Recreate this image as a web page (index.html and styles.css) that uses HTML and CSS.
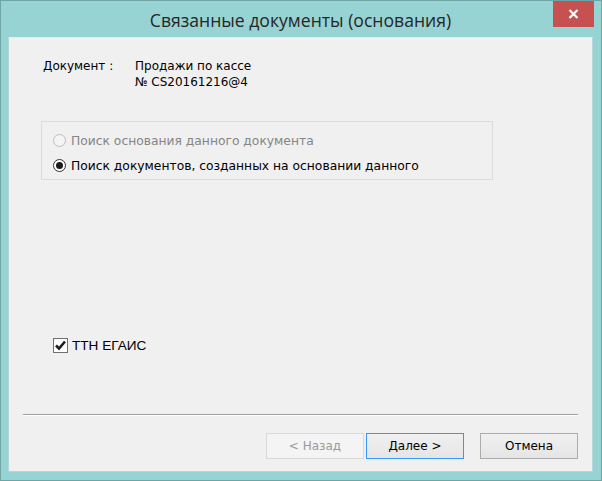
FILE: index.html
```html
<!DOCTYPE html>
<html lang="ru">
<head>
    <meta charset="UTF-8">
    <title>Связанные документы (основания)</title>
    <link rel="stylesheet" href="styles.css">
</head>
<body>
    <div class="window">
        <div class="titlebar">
            <div class="title">Связанные документы (основания)</div>
            <button class="close-btn" title="Закрыть">
                <svg width="11" height="10" viewBox="0 0 11 10">
                    <path d="M1.5 1 L9.5 9 M9.5 1 L1.5 9" stroke="#fff" stroke-width="2.2"/>
                </svg>
            </button>
        </div>

        <div class="client">
            <div class="doc-info">
                <div class="doc-label">Документ :</div>
                <div class="doc-value">
                    <div>Продажи по кассе</div>
                    <div>№ CS20161216@4</div>
                </div>
            </div>

            <div class="group-box">
                <label class="radio disabled">
                    <span class="radio-mark"></span>
                    Поиск основания данного документа
                </label>
                <label class="radio">
                    <span class="radio-mark checked"></span>
                    Поиск документов, созданных на основании данного
                </label>
            </div>

            <label class="check">
                <span class="check-box">
                    <svg width="13" height="13" viewBox="0 0 13 13">
                        <path d="M2 6.5 L5 9.5 L11 2.5" fill="none" stroke="#1e1e1e" stroke-width="2.6"/>
                    </svg>
                </span>
                ТТН ЕГАИС
            </label>

            <div class="separator"></div>

            <div class="buttons">
                <button class="btn" disabled>&lt; Назад</button>
                <button class="btn default">Далее &gt;</button>
                <button class="btn cancel">Отмена</button>
            </div>
        </div>
    </div>
</body>
</html>
```

FILE: styles.css
```css
body {
    margin: 0;
    padding: 0;
    font-family: "DejaVu Sans", Tahoma, sans-serif;
    font-size: 12px;
    color: #000;
}

.window {
    width: 602px;
    height: 481px;
    box-sizing: border-box;
    background: #98d3d3;
    border: 1px solid #6fa5a5;
    display: flex;
    flex-direction: column;
    padding: 0 8px 8px 7px;
}

.titlebar {
    position: relative;
    height: 36px;
    display: flex;
    align-items: center;
    justify-content: center;
}

.title {
    font-family: "Open Sans", "Noto Sans", sans-serif;
    font-size: 17.6px;
    color: #262626;
    padding-top: 2px;
}

.close-btn {
    position: absolute;
    top: 0;
    right: -1px;
    width: 41px;
    height: 26px;
    border: none;
    padding: 0;
    background: #c75050;
    display: flex;
    align-items: center;
    justify-content: center;
}

.client {
    flex: 1;
    background: #f0f0f0;
    border: 1px solid #b4d6d6;
    border-top-color: #dfeeee;
    display: flex;
    flex-direction: column;
}

.doc-info {
    display: flex;
    margin: 20px 0 0 34px;
    line-height: 16px;
}

.doc-label {
    width: 92px;
}

.group-box {
    margin: 31px 0 0 32px;
    width: 452px;
    height: 59px;
    box-sizing: border-box;
    border: 1px solid #dcdcdc;
    display: flex;
    flex-direction: column;
    justify-content: center;
    gap: 11px;
    padding: 5px 0 0 11px;
    font-size: 12.3px;
}

.radio {
    display: flex;
    align-items: center;
    gap: 5px;
}

.radio.disabled {
    color: #858585;
}

.radio-mark {
    width: 13px;
    height: 13px;
    border-radius: 50%;
    box-sizing: border-box;
    border: 1px solid #333;
    background: #fff;
    display: flex;
    align-items: center;
    justify-content: center;
}

.radio.disabled .radio-mark {
    border-color: #bcbcbc;
    background: #f4f4f4;
}

.radio-mark.checked::after {
    content: "";
    width: 7px;
    height: 7px;
    border-radius: 50%;
    background: #1a1a1a;
}

.check {
    margin: 158px 0 0 44px;
    display: flex;
    align-items: center;
    gap: 4px;
    font-family: "Liberation Sans", Arial, sans-serif;
    font-size: 13.6px;
}

.check-box {
    width: 15px;
    height: 15px;
    box-sizing: border-box;
    border: 1px solid #707070;
    background: #fff;
    display: flex;
    align-items: center;
    justify-content: center;
}

.separator {
    margin: 61px 0 0 14px;
    width: 555px;
    height: 1px;
    background: #a0a0a0;
    border-bottom: 1px solid #fff;
}

.buttons {
    display: flex;
    margin: 17px 0 0 257px;
}

.btn {
    width: 98px;
    height: 26px;
    box-sizing: border-box;
    border: 1px solid #acacac;
    background: linear-gradient(#f0f0f0, #e5e5e5);
    font-family: "DejaVu Sans", Tahoma, sans-serif;
    font-size: 12px;
    color: #000;
    padding: 0;
    margin-right: 2px;
}

.btn:disabled {
    border-color: #d9d9d9;
    background: #f4f4f4;
    color: #9a9a9a;
}

.btn.default {
    border-color: #3399ff;
}

.btn.cancel {
    margin-left: 14px;
}
```
